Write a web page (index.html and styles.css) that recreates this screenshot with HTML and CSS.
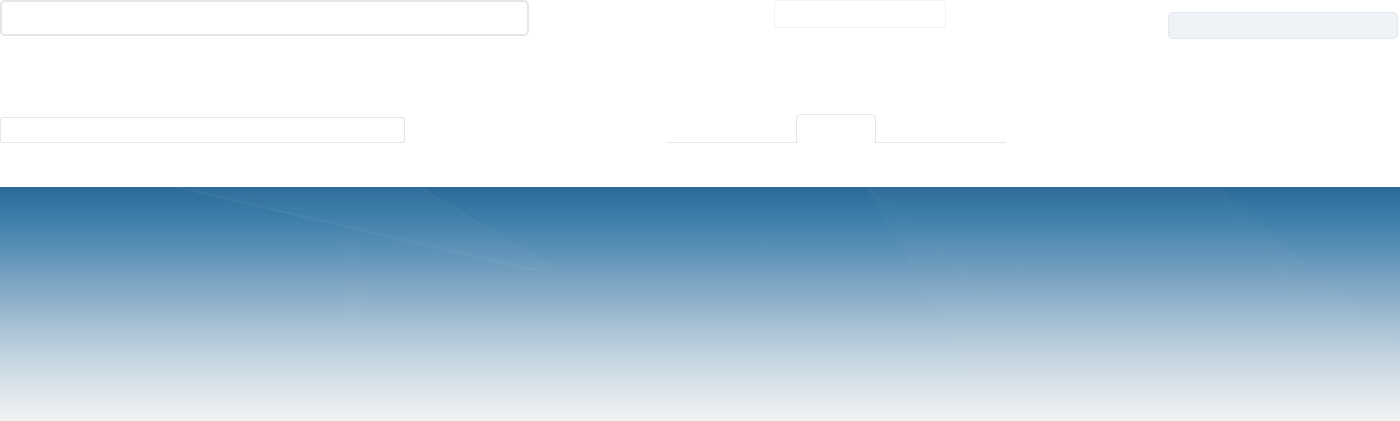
FILE: index.html
```html
<!DOCTYPE html>
<html lang="en">
<head>
<meta charset="utf-8">
<title>Page</title>
<link rel="stylesheet" href="styles.css">
</head>
<body>
<header class="top">
  <div class="search-box"></div>
  <div class="mini-box"></div>
  <div class="pill-box"></div>
</header>
<section class="toolbar">
  <div class="filter-box"></div>
  <nav class="tabs">
    <div class="tab-line left"></div>
    <div class="tab active"></div>
    <div class="tab-line right"></div>
  </nav>
</section>
<section class="banner">
  <svg class="banner-art" viewBox="0 0 1400 234" preserveAspectRatio="none" aria-hidden="true">
    <polygon points="175,0 420,0 560,84 520,84" fill="#ffffff" fill-opacity="0.025"/>
    <line x1="175" y1="0" x2="540" y2="84" stroke="#ffffff" stroke-opacity="0.07" stroke-width="1"/>
    <line x1="420" y1="0" x2="560" y2="84" stroke="#ffffff" stroke-opacity="0.06" stroke-width="1"/>
    <polygon points="340,50 360,50 372,234 350,234" fill="#ffffff" fill-opacity="0.015"/>
    <polygon points="865,0 1220,0 1400,160 1400,234 1000,234" fill="#ffffff" fill-opacity="0.02"/>
    <line x1="867" y1="0" x2="990" y2="110" stroke="#ffffff" stroke-opacity="0.06" stroke-width="1"/>
    <line x1="1215" y1="0" x2="1300" y2="110" stroke="#ffffff" stroke-opacity="0.04" stroke-width="1"/>
  </svg>
</section>
</body>
</html>
```

FILE: styles.css
```css
* { box-sizing: border-box; }
html, body { margin: 0; padding: 0; background: #ffffff; font-family: "Liberation Sans", Arial, sans-serif; }
body { width: 1400px; height: 421px; overflow: hidden; }

.top {
  display: flex;
  align-items: flex-start;
  height: 114px;
}
.search-box {
  width: 529px;
  height: 36px;
  border: 2px solid #e6e6e6;
  border-radius: 5px;
  background: #fff;
}
.mini-box {
  width: 172px;
  height: 28px;
  margin-left: 245px;
  border: 1px solid #f3f3f3;
  border-radius: 2px;
  background: #fff;
}
.pill-box {
  width: 230px;
  height: 27px;
  margin-top: 12px;
  margin-left: 222px;
  background: #eff3f7;
  border: 1px solid #e3e8ec;
  border-radius: 5px;
}

.toolbar {
  display: flex;
  align-items: flex-end;
  height: 29px;
}
.filter-box {
  width: 405px;
  height: 26px;
  border: 1px solid #e6e6e6;
  border-radius: 2px;
}
.tabs {
  display: flex;
  align-items: flex-end;
  margin-left: 262px;
  height: 29px;
}
.tab-line {
  height: 1px;
  background: #e6e6e6;
}
.tab-line.left { width: 129px; }
.tab-line.right { width: 130px; }
.tab {
  width: 80px;
  height: 29px;
  border: 1px solid #e6e6e6;
  border-bottom: none;
  border-radius: 5px 5px 0 0;
  background: #fff;
}

.banner {
  margin-top: 44px;
  height: 234px;
  background: linear-gradient(to bottom,
    #2c6a98 0%,
    #3a7ca8 12%,
    #5e92b7 28%,
    #86abc7 45%,
    #a8c2d5 60%,
    #c7d7e2 75%,
    #dee6ec 88%,
    #f2f3f4 100%);
}
.banner-art {
  display: block;
  width: 100%;
  height: 100%;
}
```
